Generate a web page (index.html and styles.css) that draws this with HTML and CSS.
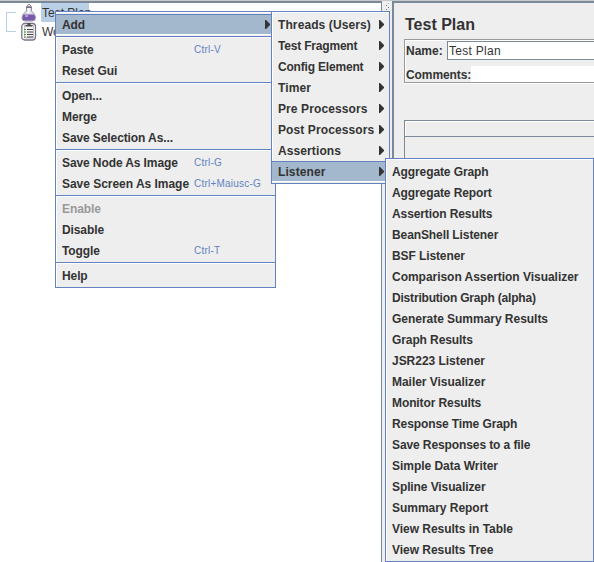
FILE: index.html
```
<!DOCTYPE html>
<html lang="en">
<head>
<meta charset="utf-8">
<title>Test Plan</title>
<link rel="stylesheet" href="styles.css">
</head>
<body>
<div class="app">
  <aside class="tree">
    <div class="branch"></div>
    <div class="nodes">
      <div class="node">
        <svg width="16" height="19" viewBox="0 0 16 19"><path d="M5.500 3.500L8 1l2.500 2.500M5.500 3.500v4.500Q1 11.500 1 14.500 1 18 4 18h7.500q3 0 3-3.500 0-3-4-6.500V3.500z" fill="#dfdfe6" stroke="#92929e"/><path d="M2.500 11.500h10.500q1.500 2 1 4-.5 2-2.500 2H4q-2.500 0-2.500-2.500 0-2 1-3.500z" fill="#7a58ae"/><path d="M4 13h3" stroke="#b39bd6" stroke-width="2"/><path d="M7.500 4v6" stroke="#fff" stroke-width="1.500"/><path d="M5 4.500h6" stroke="#777783"/></svg>
        <span class="label selected">Test Plan</span>
      </div>
      <div class="node">
        <svg width="16" height="19" viewBox="0 0 16 19"><rect x=".8" y="1.500" width="13.700" height="16.500" rx="3" fill="#fff" stroke="#7a7286" stroke-width="1.300"/><path d="M3.500 3.500h9v12.500h-9z" fill="#f2f2f2" stroke="#aaa" stroke-width=".7"/><path d="M4.500 4.500V3h2V1h3v2h2v1.500z" fill="#4b4b4b"/><path d="M6 7.500h6M6 10h6M6 12.500h6M6 15h6" stroke="#444"/><path d="M3 7.500h2M3 10h2M3 12.500h2M3 15h2" stroke="#43a047"/></svg>
        <span class="label">WorkBench</span>
      </div>
    </div>
  </aside>
  <div class="divider"><i></i><i></i><i></i><i></i></div>
  <main class="panel">
    <h1>Test Plan</h1>
    <div class="fields">
      <div class="row name"><b>Name:</b><span class="input">Test Plan</span></div>
      <div class="row comments"><b>Comments:</b><span class="plain"></span></div>
    </div>
    <div class="table"><div class="thead"></div></div>
  </main>
</div>

<nav class="menu main">
  <div class="item active"><span>Add</span><i class="arrow"></i></div>
  <hr>
  <div class="item"><span>Paste</span><kbd>Ctrl-V</kbd></div>
  <div class="item"><span>Reset Gui</span></div>
  <hr>
  <div class="item"><span>Open...</span></div>
  <div class="item"><span>Merge</span></div>
  <div class="item"><span>Save Selection As...</span></div>
  <hr>
  <div class="item"><span>Save Node As Image</span><kbd>Ctrl-G</kbd></div>
  <div class="item"><span class="wide">Save Screen As Image</span><kbd>Ctrl+Maiusc-G</kbd></div>
  <hr>
  <div class="item disabled"><span>Enable</span></div>
  <div class="item"><span>Disable</span></div>
  <div class="item"><span>Toggle</span><kbd>Ctrl-T</kbd></div>
  <hr>
  <div class="item"><span>Help</span></div>
</nav>

<nav class="menu add">
  <div class="item"><span>Threads (Users)</span><i class="arrow"></i></div>
  <div class="item"><span class="tight">Test Fragment</span><i class="arrow"></i></div>
  <div class="item"><span class="tight">Config Element</span><i class="arrow"></i></div>
  <div class="item"><span>Timer</span><i class="arrow"></i></div>
  <div class="item"><span>Pre Processors</span><i class="arrow"></i></div>
  <div class="item"><span>Post Processors</span><i class="arrow"></i></div>
  <div class="item"><span>Assertions</span><i class="arrow"></i></div>
  <div class="item active"><span>Listener</span><i class="arrow"></i></div>
</nav>

<nav class="menu listener">
  <div class="item"><span>Aggregate Graph</span></div>
  <div class="item"><span>Aggregate Report</span></div>
  <div class="item"><span>Assertion Results</span></div>
  <div class="item"><span>BeanShell Listener</span></div>
  <div class="item"><span>BSF Listener</span></div>
  <div class="item"><span class="wide">Comparison Assertion Visualizer</span></div>
  <div class="item"><span class="tight">Distribution Graph (alpha)</span></div>
  <div class="item"><span class="wide">Generate Summary Results</span></div>
  <div class="item"><span>Graph Results</span></div>
  <div class="item"><span class="wide">JSR223 Listener</span></div>
  <div class="item"><span class="wide">Mailer Visualizer</span></div>
  <div class="item"><span>Monitor Results</span></div>
  <div class="item"><span>Response Time Graph</span></div>
  <div class="item"><span>Save Responses to a file</span></div>
  <div class="item"><span class="wide">Simple Data Writer</span></div>
  <div class="item"><span>Spline Visualizer</span></div>
  <div class="item"><span class="wide">Summary Report</span></div>
  <div class="item"><span class="wide">View Results in Table</span></div>
  <div class="item"><span class="wide">View Results Tree</span></div>
</nav>
</body>
</html>
```
FILE: styles.css
```
* { box-sizing: border-box; }
body {
  margin: 0;
  width: 594px;
  height: 562px;
  overflow: hidden;
  font: 12px/14px "Liberation Sans", Arial, sans-serif;
  color: #333;
}
.app { display: flex; height: 562px; border-top: 1px solid #c8c8c8; background: #eee; }
.tree {
  display: flex;
  width: 382px;
  padding: 0 0 0 6px;
  background: #fff;
  border-top: 2px solid #7a8a99;
  border-right: 1px solid #7a8a99;
}
.branch { width: 10px; height: 20px; margin-top: 9px; border: 1px solid #b8cfe5; border-right: 0; }
.nodes { margin-left: 5px; }
.node { display: flex; align-items: center; height: 19px; }
.node svg { flex: none; }
.label { margin-left: 4px; padding: 3px 2px 2px 1px; white-space: nowrap; }
.label.selected { width: 48px; height: 19px; background: #b8cfe5; }
.divider { position: relative; width: 10px; background: #eee; }
.divider i { position: absolute; width: 1px; height: 1px; background: #777; left: 4px; top: 4px; }
.divider i:nth-child(2) { left: 6px; top: 6px; }
.divider i:nth-child(3) { left: 4px; top: 8px; }
.divider i:nth-child(4) { left: 6px; top: 2px; background: #bbb; }
.panel { flex: 1; padding: 13px 0 0 10px; border-top: 2px solid #7a8a99; border-left: 2px solid #7a8a99; }
h1 { margin: 0 0 5px 1px; font-size: 16px; line-height: 18px; }
.fields { height: 44px; border: 1px solid #999; border-right: 0; box-shadow: inset 1px 1px #fff, 0 1px #fff; padding: 1px 0 0 1px; }
.row { display: flex; }
.name { height: 19px; line-height: 21px; margin-bottom: 6px; }
.name b { width: 41px; }
.input { flex: 1; padding-left: 1px; border: 1px solid #7a8a99; border-right: 0; background: #fff; line-height: 19px; letter-spacing: .28px; }
.comments { height: 16px; line-height: 18px; }
.comments b { width: 65px; letter-spacing: -.08px; }
.plain { flex: 1; background: #fff; }
.table { height: 420px; margin-top: 37px; border: 1px solid #7a8a99; border-right: 0; }
.thead { height: 16px; border-bottom: 1px solid #7a8a99; box-shadow: inset 1px 1px #fff; }

.menu {
  position: absolute;
  padding: 2px 0 1px;
  background: #eee;
  border: 1px solid #6382bf;
  box-shadow: inset 1px 1px #fff;
  font-weight: bold;
}
.main { left: 55px; top: 11px; width: 221px; }
.add { left: 271px; top: 11px; width: 119px; }
.listener { left: 385px; top: 158px; width: 209px; }
.item { display: flex; align-items: center; height: 21px; padding-left: 6px; white-space: pre; letter-spacing: -.1px; }
.add .item { letter-spacing: .1px; }
.item .wide { letter-spacing: -.03px; }
.item .tight { letter-spacing: -.19px; }
.main .item > span { width: 132px; flex: none; }
.item.active { background: #a3b8cc; border-top: 1px solid #6382bf; border-bottom: 1px solid #fff; }
.item.disabled { color: #999; }
kbd { font: 10px/14px "Liberation Sans", Arial, sans-serif; letter-spacing: .22px; color: #6382bf; }
hr { height: 4px; margin: 0; border: 0; background: linear-gradient(transparent 1px, #6382bf 1px 2px, #fff 2px 3px, transparent 3px); }
.arrow { width: 5px; height: 9px; margin: 0 5px 0 auto; background: #333; clip-path: polygon(0 0, 20% 0, 100% 45%, 100% 55%, 20% 100%, 0 100%); }
```
